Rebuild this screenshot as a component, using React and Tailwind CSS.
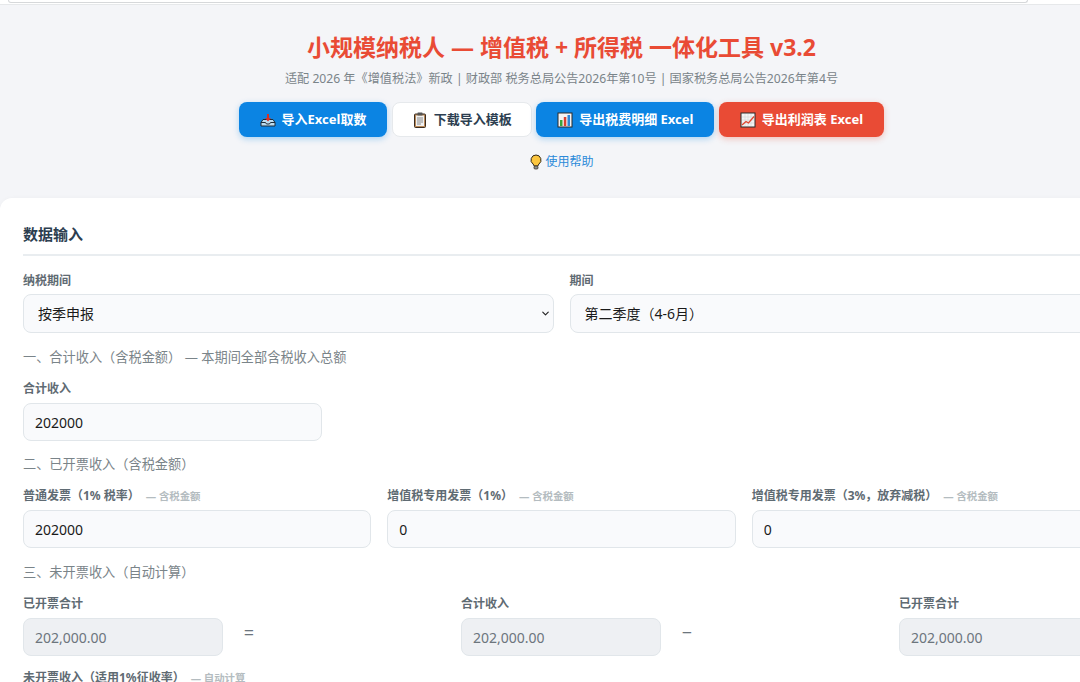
import { ChevronDown } from "lucide-react";

const font = `[font-family:"Noto_Sans","Noto_Sans_CJK_SC",sans-serif]`;

function InboxIcon() {
  return (
    <svg viewBox="0 0 16 16" className="w-4 h-4 shrink-0">
      <path d="M1 10.5 3 7.5h10l2 3v3.500H1z" fill="#bcdcf0" stroke="#1f2d38" strokeWidth="1" />
      <path d="M1 10.500h4.500l1 1.500h3l1-1.500H15" fill="none" stroke="#1f2d38" strokeWidth="1" />
      <path d="M7 2h2v4h2L8 9.500 5 6h2z" fill="#d93025" />
    </svg>
  );
}

function ClipboardIcon() {
  return (
    <svg viewBox="0 0 16 16" className="w-4 h-4 shrink-0">
      <rect x="2.500" y="2" width="11" height="13.500" rx="1" fill="#b98a5a" stroke="#3a2c20" />
      <rect x="4" y="3.500" width="8" height="10.500" fill="#f1f1f1" />
      <rect x="5.500" y="0.500" width="5" height="3" rx="0.500" fill="#555" />
      <path d="M5 6h6M5 8h6M5 10h6M5 12h4" stroke="#8a8a8a" strokeWidth="1" />
    </svg>
  );
}

function BarIcon() {
  return (
    <svg viewBox="0 0 16 16" className="w-4 h-4 shrink-0">
      <rect x="1" y="1" width="14" height="14" fill="#f4f4f4" stroke="#2b2b2b" />
      <rect x="3" y="8" width="2.500" height="6" fill="#3ca33c" />
      <rect x="6.800" y="5" width="2.500" height="9" fill="#d9412e" />
      <rect x="10.500" y="3" width="2.500" height="11" fill="#2f86d6" />
    </svg>
  );
}

function LineIcon() {
  return (
    <svg viewBox="0 0 16 16" className="w-4 h-4 shrink-0">
      <rect x="1" y="1" width="14" height="14" fill="#f4f4f4" stroke="#2b2b2b" />
      <path d="M2 5h12M2 8h12M2 11h12M5 2v12M8 2v12M11 2v12" stroke="#d4d4d4" strokeWidth="0.600" />
      <path d="M2 13 6 9.500 8.500 11 14 4.500" fill="none" stroke="#e0452f" strokeWidth="1.300" />
    </svg>
  );
}

function BulbIcon() {
  return (
    <svg viewBox="0 0 14 16" className="w-[14px] h-4 shrink-0">
      <path d="M7 1a5 5 0 0 0-3 9c.8.700 1 1.300 1 2h4c0-.700.2-1.300 1-2a5 5 0 0 0-3-9z" fill="#fcc63f" stroke="#33291a" />
      <rect x="5" y="12" width="4" height="3" rx="1" fill="#8a8f94" stroke="#33291a" strokeWidth="0.700" />
    </svg>
  );
}

function Btn({ icon, label, className }) {
  return (
    <button className={"h-[35px] rounded-lg flex items-center justify-center gap-1.5 text-[13px] font-bold " + className}>
      {icon}
      <span>{label}</span>
    </button>
  );
}

function Label({ text, hint, className }) {
  return (
    <label className={"block text-xs font-bold text-[#5f6b73] leading-4 " + (className || "mb-[6px]")}>
      {text}
      {hint && <span className="ml-[6px] text-[10.4px] font-bold text-[#b4bcc0]">— {hint}</span>}
    </label>
  );
}

function Field({ label, hint, value, className, readOnly }) {
  return (
    <div className={className}>
      <Label text={label} hint={hint} />
      <input
        readOnly
        value={value}
        className={
          "w-full h-[38px] px-[11px] rounded-lg border text-sm outline-none " +
          (readOnly
            ? "bg-[#eef0f3] border-[#e1e6ea] text-[#6c757d]"
            : "bg-[#f9fafc] border-[#e1e6ea] text-[#1a1a1a]")
        }
      />
    </div>
  );
}

function SelectField({ label, value }) {
  return (
    <div>
      <Label text={label} className="mb-[5px]" />
      <div className="relative">
        <select className="w-full h-[39px] pl-[14px] pr-8 rounded-lg border border-[#e1e6ea] bg-[#f9fafc] text-sm text-[#1a1a1a] outline-none appearance-none">
          <option>{value}</option>
        </select>
        <ChevronDown className="absolute right-[3px] top-[14px] w-[11px] h-[11px] text-[#222]" strokeWidth={2.5} />
      </div>
    </div>
  );
}

function SectionTitle({ children, className }) {
  return <div className={"text-[13.2px] leading-5 text-[#7a8489] " + className}>{children}</div>;
}

function Formula({ label, op }) {
  return (
    <div className="flex items-end gap-5">
      <Field label={label} value="202,000.00" readOnly className="w-[200px] shrink-0" />
      {op && <span className="text-lg leading-[38px] mb-[5px] text-[#6c757d] w-3 text-center">{op}</span>}
    </div>
  );
}

export default function App() {
  return (
    <div className={"w-[1080px] h-[682px] overflow-hidden bg-[#f4f5f8] " + font}>
      <div className="w-[1123px]">
        <div className="h-[5px] w-[1080px] bg-white border-b border-[#e6e8ea] overflow-hidden">
          <div className="h-[3px] w-[1020px] ml-2 border border-t-0 border-[#d6d8da] rounded-b-lg"></div>
        </div>

        <div className="pt-[25px] text-center">
          <h1 className="text-[23px] leading-[34px] font-bold text-[#e94b35]">
            小规模纳税人 — 增值税 + 所得税 一体化工具 v3.2
          </h1>
          <p className="mt-[5px] text-[12.16px] leading-5 text-[#7a8489]">
            适配 2026 年《增值税法》新政 | 财政部 税务总局公告2026年第10号 | 国家税务总局公告2026年第4号
          </p>
          <div className="mt-[13px] flex justify-center gap-[4.67px]">
            <Btn icon={<InboxIcon />} label="导入Excel取数" className="w-[148px] bg-[#0b84e3] text-white shadow-[0_2px_6px_rgba(11,132,227,0.3)]" />
            <Btn icon={<ClipboardIcon />} label="下载导入模板" className="w-[140px] bg-white text-[#2c3e50] border border-[#e6e9ec]" />
            <Btn icon={<BarIcon />} label="导出税费明细 Excel" className="w-[178px] bg-[#0b84e3] text-white shadow-[0_2px_6px_rgba(11,132,227,0.3)]" />
            <Btn icon={<LineIcon />} label="导出利润表 Excel" className="w-[165px] bg-[#e94b35] text-white shadow-[0_2px_6px_rgba(233,75,53,0.3)]" />
          </div>
          <div className="mt-[15px] flex justify-center items-center gap-[2px] text-xs leading-5 text-[#2b8ad8]">
            <BulbIcon />
            <span>使用帮助</span>
          </div>
        </div>

        <div className="mt-[26px] bg-white rounded-t-xl px-[23px] pt-[24px] pb-6 shadow-[0_0_4px_rgba(0,0,0,0.03)]">
          <h2 className="text-[15px] leading-6 font-bold text-[#2c3e50] pb-2 border-b-2 border-[#e9edf0]">数据输入</h2>

          <div className="mt-[17px] grid grid-cols-2 gap-4">
            <SelectField label="纳税期间" value="按季申报" />
            <SelectField label="期间" value="第二季度（4-6月）" />
          </div>

          <SectionTitle className="mt-[14px]">一、合计收入（含税金额） — 本期间全部含税收入总额</SectionTitle>
          <Field label="合计收入" value="202000" className="mt-[14px] w-[299px]" />

          <SectionTitle className="mt-[13px]">二、已开票收入（含税金额）</SectionTitle>
          <div className="mt-[14px] grid grid-cols-3 gap-4">
            <Field label="普通发票（1% 税率）" hint="含税金额" value="202000" />
            <Field label="增值税专用发票（1%）" hint="含税金额" value="0" />
            <Field label="增值税专用发票（3%，放弃减税）" hint="含税金额" value="0" />
          </div>

          <SectionTitle className="mt-[14px]">三、未开票收入（自动计算）</SectionTitle>
          <div className="mt-[14px] grid grid-cols-[438px_438px_200px]">
            <Formula label="已开票合计" op="=" />
            <Formula label="合计收入" op="−" />
            <Formula label="已开票合计" />
          </div>

          <Field label="未开票收入（适用1%征收率）" hint="自动计算" value="0.00" readOnly className="mt-[14px] w-[299px]" />
        </div>
      </div>
    </div>
  );
}
